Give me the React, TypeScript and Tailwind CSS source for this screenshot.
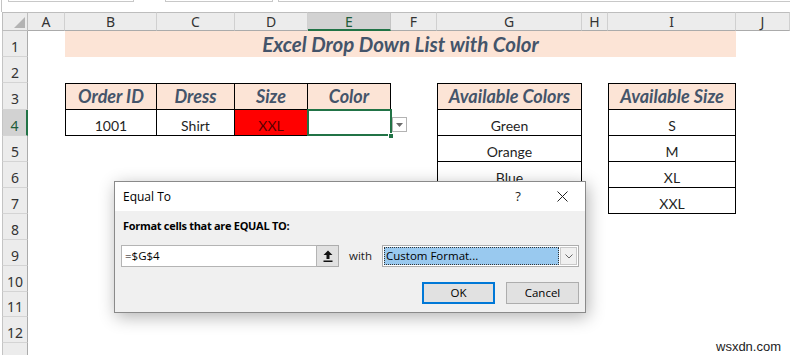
import React from "react";

const letters = ["A", "B", "C", "D", "E", "F", "G", "H", "I", "J"];

const hdr = "font-['Lato',sans-serif] font-bold italic text-[18px] text-[#44546a]";
const data = "flex items-center justify-center pt-[6px] text-[14px] text-[#1f1f1f]";

const RowHead: React.FC<{ n: number; active?: boolean }> = ({ n, active }) => (
  <div
    className={`ml-[2px] flex items-center justify-center pt-[5px] border-l border-b border-l-[#c4c4c4] border-b-[#d4d4d4] text-[14px] font-['Noto_Sans',sans-serif] ${
      active
        ? "bg-[#d2d2d2] border-r-2 border-r-[#217346] text-[#1e5c3a]"
        : "bg-[#ececec] border-r border-r-[#ababab] text-[#333]"
    }`}
  >
    {n}
  </div>
);

const Empty: React.FC<{ children?: React.ReactNode }> = ({ children }) => <div>{children}</div>;

export default function App() {
  return (
    <div className="relative w-[790px] h-[355px] overflow-hidden bg-white font-['Lato',sans-serif]">
      {/* formula bar leftovers */}
      <div className="flex h-[12px] items-start">
        <div className="w-[2px] h-full border-r border-[#c4c4c4]" />
        <div className="w-[6px]" />
        <div className="w-[126px] h-[2px] border-b border-l border-r border-[#c8c8c8]" />
        <div className="w-[31px]" />
        <div className="w-[108px] h-[2px] border-b border-l border-r border-[#c8c8c8]" />
        <div className="w-[5px]" />
        <div className="flex-1 h-[2px] border-b border-l border-[#c8c8c8]" />
      </div>

      <div className="grid grid-cols-[28px_37px_92px_78px_73px_83px_46px_145px_26px_128px_54px] grid-rows-[19px_26px_26px_27px_26px_26px_26px_26px_26px_26px_26px_25px_26px_12px]">
        {/* column header row */}
        <div className="relative ml-[2px] bg-[#ececec] border-l border-t border-r border-b border-[#bdbdbd]">
          <svg className="absolute right-[2px] bottom-[2px]" width="11" height="11" viewBox="0 0 11 11">
            <path d="M11 0 L11 11 L0 11 Z" fill="#b3b3b3" />
          </svg>
        </div>
        {letters.map((l) =>
          l === "E" ? (
            <div
              key={l}
              className="flex items-center justify-center bg-[#d2d2d2] border-t border-t-[#bdbdbd] border-r border-r-[#c4c4c4] border-b-2 border-b-[#217346] text-[14px] text-[#1e5c3a] font-['Noto_Sans',sans-serif]"
            >
              {l}
            </div>
          ) : (
            <div
              key={l}
              className="flex items-center justify-center bg-[#ececec] border-t border-r border-b border-t-[#bdbdbd] border-r-[#d0d0d0] border-b-[#ababab] text-[14px] text-[#333] font-['Noto_Sans',sans-serif]"
            >
              {l}
            </div>
          )
        )}

        {/* row 1 */}
        <RowHead n={1} />
        <Empty />
        <div className="col-span-8 flex items-center justify-center bg-[#fce4d6] font-['Lato',sans-serif] font-bold italic text-[20.5px] text-[#44546a]">
          Excel Drop Down List with Color
        </div>
        <Empty />

        {/* row 2 */}
        <RowHead n={2} />
        {letters.map((l) => (
          <Empty key={l} />
        ))}

        {/* row 3 */}
        <RowHead n={3} />
        <Empty />
        <div className={`flex items-center justify-center bg-[#fce4d6] border border-black ${hdr}`}>Order ID</div>
        <div className={`flex items-center justify-center bg-[#fce4d6] border-t border-r border-b border-black ${hdr}`}>Dress</div>
        <div className={`flex items-center justify-center bg-[#fce4d6] border-t border-r border-b border-black ${hdr}`}>Size</div>
        <div className={`flex items-center justify-center bg-[#fce4d6] border-t border-r border-b border-black ${hdr}`}>Color</div>
        <Empty />
        <div className={`flex items-center justify-center bg-[#fce4d6] border border-black ${hdr}`}>Available Colors</div>
        <Empty />
        <div className={`flex items-center justify-center bg-[#fce4d6] border border-black ${hdr}`}>Available Size</div>
        <Empty />

        {/* row 4 */}
        <RowHead n={4} active />
        <Empty />
        <div className={`${data} border-l border-r border-b border-black`}>1001</div>
        <div className={`${data} border-r border-b border-black`}>Shirt</div>
        <div className="flex items-center justify-center pt-[6px] text-[14px] text-[#5a0000] bg-[#ff0000] border-r border-b border-black">XXL</div>
        <div className="relative border-b border-black">
          <div className="absolute -left-[1px] -top-[1px] -right-[1px] -bottom-[1px] border-2 border-[#217346]" />
          <div className="absolute -right-[3px] -bottom-[4px] w-[6px] h-[6px] bg-[#217346] border border-white" />
        </div>
        <div className="pl-[1px] pt-[7px]">
          <div className="flex items-center justify-center w-[15px] h-[15px] border border-[#b3b3b3] bg-white">
            <svg width="7" height="4" viewBox="0 0 7 4">
              <path d="M0 0 L7 0 L3.5 4 Z" fill="#6b6b6b" />
            </svg>
          </div>
        </div>
        <div className={`${data} border-l border-r border-b border-black`}>Green</div>
        <Empty />
        <div className={`${data} border-l border-r border-b border-black`}>S</div>
        <Empty />

        {/* row 5 */}
        <RowHead n={5} />
        {letters.slice(0, 6).map((l) => (
          <Empty key={l} />
        ))}
        <div className={`${data} border-l border-r border-b border-black`}>Orange</div>
        <Empty />
        <div className={`${data} border-l border-r border-b border-black`}>M</div>
        <Empty />

        {/* row 6 */}
        <RowHead n={6} />
        {letters.slice(0, 6).map((l) => (
          <Empty key={l} />
        ))}
        <div className={`${data} border-l border-r border-b border-black`}>Blue</div>
        <Empty />
        <div className={`${data} border-l border-r border-b border-black`}>XL</div>
        <Empty />

        {/* row 7 */}
        <RowHead n={7} />
        {letters.slice(0, 6).map((l) => (
          <Empty key={l} />
        ))}
        <div className="border-l border-r border-b border-black" />
        <Empty />
        <div className={`${data} border-l border-r border-b border-black`}>XXL</div>
        <Empty />

        {/* rows 8 - 12 */}
        {[8, 9, 10, 11, 12].map((n) => (
          <React.Fragment key={n}>
            <RowHead n={n} />
            {letters.map((l) => (
              <Empty key={l} />
            ))}
          </React.Fragment>
        ))}

        {/* row 13, cut off */}
        <div className="ml-[2px] bg-[#ececec] border-l border-r border-[#c4c4c4] border-r-[#ababab]" />
        {letters.map((l) => (
          <Empty key={l} />
        ))}
      </div>

      {/* dialog */}
      <div className="absolute left-[114px] top-[181px] w-[472px] h-[132px] flex flex-col border border-[#8a8a8a] bg-[#f0f0f0] shadow-[2px_4px_16px_rgba(0,0,0,0.3)] font-['Open_Sans',sans-serif] text-[11.5px] text-black">
        <div className="flex items-center h-[29px] bg-white">
          <span className="pl-[8px] text-[12px]">Equal To</span>
          <span className="ml-auto mr-[14px] w-[14px] text-center text-[13px] text-[#222]">?</span>
          <div className="flex items-center justify-center w-[46px]">
            <svg width="11" height="11" viewBox="0 0 11 11">
              <path d="M0.5 0.5 L10.5 10.5 M10.5 0.5 L0.5 10.5" stroke="#222" strokeWidth="1" />
            </svg>
          </div>
        </div>
        <div className="flex-1 flex flex-col px-[6px]">
          <div className="pt-[7px] pl-[2px] font-bold text-[11px] tracking-[-0.3px] leading-[16px]">Format cells that are EQUAL TO:</div>
          <div className="flex items-center mt-[11px] h-[22px]">
            <div className="flex items-center w-[196px] h-full bg-white border border-[#b4b4b4] pl-[3px]">=$G$4</div>
            <div className="flex items-center justify-center w-[22px] h-full bg-[#e1e1e1] border border-l-0 border-[#adadad]">
              <svg width="10" height="12" viewBox="0 0 10 12">
                <path d="M5 0.5 L9.5 5 L6.5 5 L6.5 9 L3.5 9 L3.5 5 L0.5 5 Z" fill="#111" />
                <rect x="0.5" y="10.5" width="9" height="1.5" fill="#111" />
              </svg>
            </div>
            <span className="w-[43px] pl-[10px] text-[#222]">with</span>
            <div className="flex items-center w-[197px] h-full bg-white border border-[#adadad] p-[1px]">
              <div className="flex items-center flex-1 h-full bg-[#99c9ef] border border-dotted border-[#333] pl-[1px]">Custom Format...</div>
              <div className="flex items-center justify-center w-[17px] h-full ml-[1px] bg-[#f0f0f0] border border-[#c8c8c8]">
                <svg width="8" height="5" viewBox="0 0 8 5">
                  <path d="M0.5 0.5 L4 4 L7.5 0.5" stroke="#666" strokeWidth="1" fill="none" />
                </svg>
              </div>
            </div>
          </div>
          <div className="flex justify-end gap-[11px] mt-[15px]">
            <div className="flex items-center justify-center w-[73px] h-[22px] bg-[#e1e1e1] border-2 border-[#0078d7]">OK</div>
            <div className="flex items-center justify-center w-[73px] h-[22px] bg-[#e1e1e1] border border-[#adadad]">Cancel</div>
          </div>
        </div>
      </div>

      {/* watermark */}
      <div className="absolute left-[716px] top-[337px] font-['Liberation_Sans',sans-serif] text-[13px] text-[#222]">wsxdn.com</div>
    </div>
  );
}
